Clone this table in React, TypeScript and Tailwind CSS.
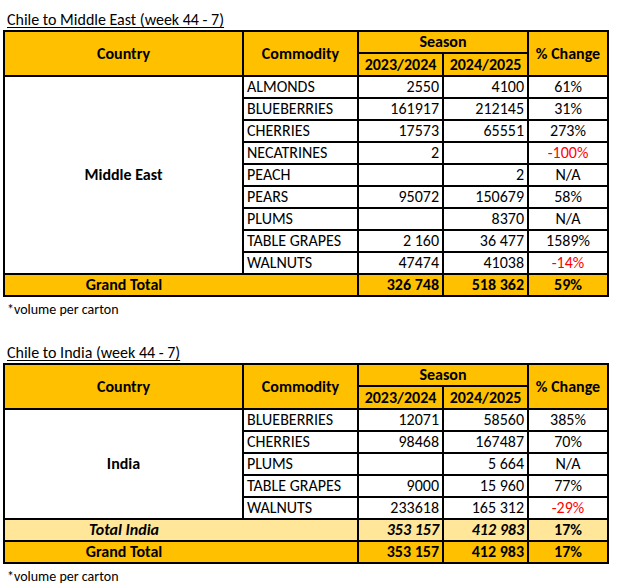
import React from "react";

type Row = { name: string; a: string; b: string; pct: string; red?: boolean };

const me: Row[] = [
  { name: "ALMONDS", a: "2550", b: "4100", pct: "61%" },
  { name: "BLUEBERRIES", a: "161917", b: "212145", pct: "31%" },
  { name: "CHERRIES", a: "17573", b: "65551", pct: "273%" },
  { name: "NECATRINES", a: "2", b: "", pct: "-100%", red: true },
  { name: "PEACH", a: "", b: "2", pct: "N/A" },
  { name: "PEARS", a: "95072", b: "150679", pct: "58%" },
  { name: "PLUMS", a: "", b: "8370", pct: "N/A" },
  { name: "TABLE GRAPES", a: "2 160", b: "36 477", pct: "1589%" },
  { name: "WALNUTS", a: "47474", b: "41038", pct: "-14%", red: true },
];

const india: Row[] = [
  { name: "BLUEBERRIES", a: "12071", b: "58560", pct: "385%" },
  { name: "CHERRIES", a: "98468", b: "167487", pct: "70%" },
  { name: "PLUMS", a: "", b: "5 664", pct: "N/A" },
  { name: "TABLE GRAPES", a: "9000", b: "15 960", pct: "77%" },
  { name: "WALNUTS", a: "233618", b: "165 312", pct: "-29%", red: true },
];

const cell = "border-2 border-black p-0 leading-none";

function Header() {
  return (
    <thead>
      <tr className="h-[22px] bg-[#ffc000] font-bold">
        <th rowSpan={2} className={cell + " text-center"}>Country</th>
        <th rowSpan={2} className={cell + " text-center"}>Commodity</th>
        <th colSpan={2} className={cell + " text-center"}>Season</th>
        <th rowSpan={2} className={cell + " text-center"}>% Change</th>
      </tr>
      <tr className="h-[23px] bg-[#ffc000] font-bold">
        <th className={cell + " text-center"}>2023/2024</th>
        <th className={cell + " text-center"}>2024/2025</th>
      </tr>
    </thead>
  );
}

function DataTable({ country, rows, total }: { country: string; rows: Row[]; total?: { label: string; a: string; b: string; pct: string } }) {
  return (
    <table className="ml-[3px] w-[604px] table-fixed border-collapse border-2 border-black text-[16px] text-black">
      <colgroup>
        <col className="w-[239px]" />
        <col className="w-[115px]" />
        <col className="w-[85px]" />
        <col className="w-[85px]" />
        <col className="w-[80px]" />
      </colgroup>
      <Header />
      <tbody>
        {rows.map((r, i) => (
          <tr key={r.name} className="h-[22px]">
            {i === 0 && (
              <td rowSpan={rows.length} className={cell + " text-center font-bold"}>
                {country}
              </td>
            )}
            <td className={cell + " pl-[3px] text-left"}>{r.name}</td>
            <td className={cell + " pr-[3px] text-right"}>{r.a}</td>
            <td className={cell + " pr-[3px] text-right"}>{r.b}</td>
            <td className={cell + " text-center " + (r.red ? "text-[#ff0000]" : "")}>{r.pct}</td>
          </tr>
        ))}
        {total && (
          <tr className="h-[22px] bg-[#ffe699] font-bold">
            <td className={cell + " border-r-0 text-center italic"}>{total.label}</td>
            <td className={cell + " border-l-0"}></td>
            <td className={cell + " pr-[3px] text-right italic"}>{total.a}</td>
            <td className={cell + " pr-[3px] text-right italic"}>{total.b}</td>
            <td className={cell + " text-center"}>{total.pct}</td>
          </tr>
        )}
        <tr className="h-[22px] bg-[#ffc000] font-bold">
          <td className={cell + " border-r-0 text-center"}>Grand Total</td>
          <td className={cell + " border-l-0"}></td>
          <td className={cell + " pr-[3px] text-right"}>{total ? total.a : "326 748"}</td>
          <td className={cell + " pr-[3px] text-right"}>{total ? total.b : "518 362"}</td>
          <td className={cell + " text-center"}>{total ? total.pct : "59%"}</td>
        </tr>
      </tbody>
    </table>
  );
}

export default function App() {
  return (
    <div
      className="w-[623px] h-[587px] bg-white text-black overflow-hidden"
      style={{ fontFamily: 'Carlito, Calibri, Lato, "Liberation Sans", sans-serif' }}
    >
      <div className="h-[30px] flex items-end pl-[7px] text-[16px] leading-[20px]">
        <span className="underline underline-offset-2">Chile to Middle East (week 44 - 7)</span>
      </div>
      <DataTable country="Middle East" rows={me} />
      <div className="h-[24px] flex items-center pl-[7px] text-[14px]">*volume per carton</div>
      <div className="h-[42px] flex items-end pl-[7px] text-[16px] leading-[20px]">
        <span className="underline underline-offset-2">Chile to India (week 44 - 7)</span>
      </div>
      <DataTable
        country="India"
        rows={india}
        total={{ label: "Total India", a: "353 157", b: "412 983", pct: "17%" }}
      />
      <div className="h-[24px] flex items-center pl-[7px] text-[14px]">*volume per carton</div>
    </div>
  );
}
